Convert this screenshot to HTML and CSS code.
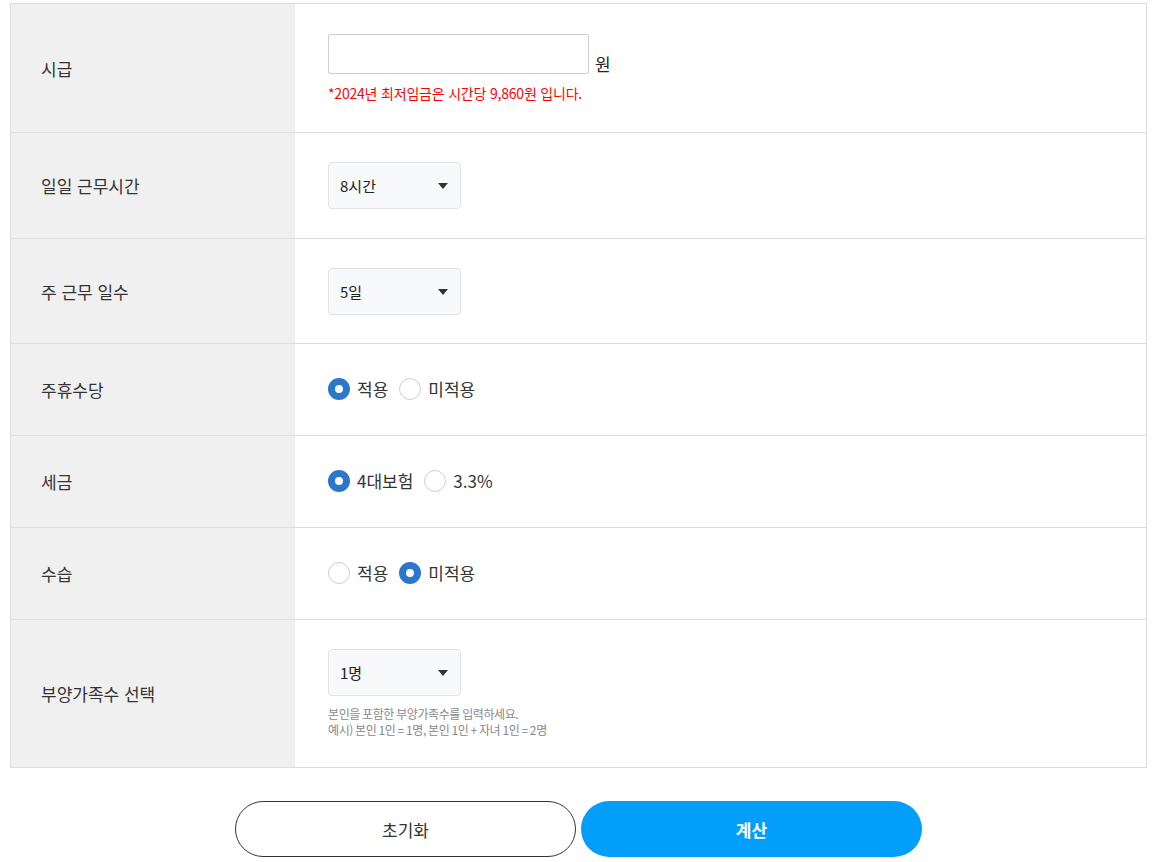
FILE: index.html
```html
<!DOCTYPE html>
<html lang="ko">
<head>
<meta charset="utf-8">
<title>시급 계산기</title>
<link rel="stylesheet" href="styles.css">
</head>
<body>
<div class="wrap">
  <div class="table">
    <div class="row r1">
      <div class="th">시급</div>
      <div class="td">
        <div class="inline"><input class="text-input" type="text"><span class="unit">원</span></div>
        <p class="warn">*2024년 최저임금은 시간당 9,860원 입니다.</p>
      </div>
    </div>
    <div class="row r2">
      <div class="th">일일 근무시간</div>
      <div class="td">
        <div class="select"><span>8시간</span><svg class="arrow" width="10" height="6" viewBox="0 0 10 6"><path d="M0 0H10L5 6Z" fill="#333"/></svg></div>
      </div>
    </div>
    <div class="row r3">
      <div class="th">주 근무 일수</div>
      <div class="td">
        <div class="select"><span>5일</span><svg class="arrow" width="10" height="6" viewBox="0 0 10 6"><path d="M0 0H10L5 6Z" fill="#333"/></svg></div>
      </div>
    </div>
    <div class="row r4">
      <div class="th">주휴수당</div>
      <div class="td radios">
        <label class="radio"><span class="dot on"></span>적용</label>
        <label class="radio"><span class="dot"></span>미적용</label>
      </div>
    </div>
    <div class="row r5">
      <div class="th">세금</div>
      <div class="td radios">
        <label class="radio"><span class="dot on"></span>4대보험</label>
        <label class="radio"><span class="dot"></span>3.3%</label>
      </div>
    </div>
    <div class="row r6">
      <div class="th">수습</div>
      <div class="td radios">
        <label class="radio"><span class="dot"></span>적용</label>
        <label class="radio"><span class="dot on"></span>미적용</label>
      </div>
    </div>
    <div class="row r7">
      <div class="th">부양가족수 선택</div>
      <div class="td">
        <div class="select"><span>1명</span><svg class="arrow" width="10" height="6" viewBox="0 0 10 6"><path d="M0 0H10L5 6Z" fill="#333"/></svg></div>
        <p class="note">본인을 포함한 부양가족수를 입력하세요.<br>예시) 본인 1인 = 1명, 본인 1인 + 자녀 1인 = 2명</p>
      </div>
    </div>
  </div>
  <div class="buttons">
    <button class="btn reset" type="button">초기화</button>
    <button class="btn calc" type="button">계산</button>
  </div>
</div>
</body>
</html>
```
FILE: styles.css
```css
* { box-sizing: border-box; }
html, body { margin: 0; padding: 0; background: #fff; }
body {
  font-family: "Noto Sans CJK KR", "Noto Sans", sans-serif;
  color: #333;
  font-size: 17px;
}
.wrap { padding: 3px 10px 0; }
.table {
  border: 1px solid #dcdcdc;
  border-bottom: none;
}
.row {
  display: grid;
  grid-template-columns: 284px 1fr;
  border-bottom: 1px solid #dcdcdc;
}
.r1 { height: 129px; }
.r2 { height: 106px; }
.r3 { height: 105px; }
.r4, .r5, .r6 { height: 92px; }
.r7 { height: 148px; }
.th {
  background: #f0f0f0;
  display: flex;
  align-items: center;
  padding-left: 30px;
  font-size: 17px;
  color: #333;
}
.td {
  display: flex;
  flex-direction: column;
  justify-content: center;
  align-items: flex-start;
  padding-left: 33px;
}
.inline { display: flex; align-items: flex-end; }
.text-input {
  width: 261px;
  height: 40px;
  border: 1px solid #cfcfcf;
  border-radius: 2px;
  margin: 0;
  padding: 0 10px;
  font: inherit;
}
.unit { margin-left: 6px; font-size: 17px; color: #222; line-height: 20px; }
.warn {
  margin: 10px 0 0;
  color: #ff0000;
  font-size: 14px;
  line-height: 18px;
  letter-spacing: -0.2px;
}
.select {
  position: relative;
  width: 133px;
  height: 47px;
  border: 1px solid #e2e2e2;
  border-radius: 4px;
  background: #f8f9fa;
  display: flex;
  align-items: center;
  padding-left: 11px;
  font-size: 15px;
  color: #222;
}
.arrow { position: absolute; right: 12px; top: 20px; }
.note {
  margin: 10px 0 0;
  font-size: 12px;
  line-height: 16px;
  color: #888;
  letter-spacing: -0.4px;
  word-spacing: -0.8px;
}
.radios { flex-direction: row; align-items: center; justify-content: flex-start; padding-bottom: 3px; }
.radio {
  display: flex;
  align-items: center;
  margin-right: 11px;
  font-size: 17px;
  color: #333;
}
.dot {
  width: 22px;
  height: 22px;
  border-radius: 50%;
  border: 1px solid #cfcfcf;
  background: #fff;
  margin-right: 7px;
  position: relative;
  top: 1px;
}
.dot.on { border: 7px solid #2a77cb; }
.buttons {
  display: flex;
  justify-content: center;
  gap: 5px;
  margin-top: 33px;
}
.btn {
  width: 341px;
  height: 56px;
  border-radius: 28px;
  font-family: inherit;
  font-size: 17px;
  cursor: pointer;
}
.reset { background: #fff; border: 1px solid #333; color: #333; }
.calc { background: #039ef9; border: none; color: #fff; font-weight: 700; }
```
